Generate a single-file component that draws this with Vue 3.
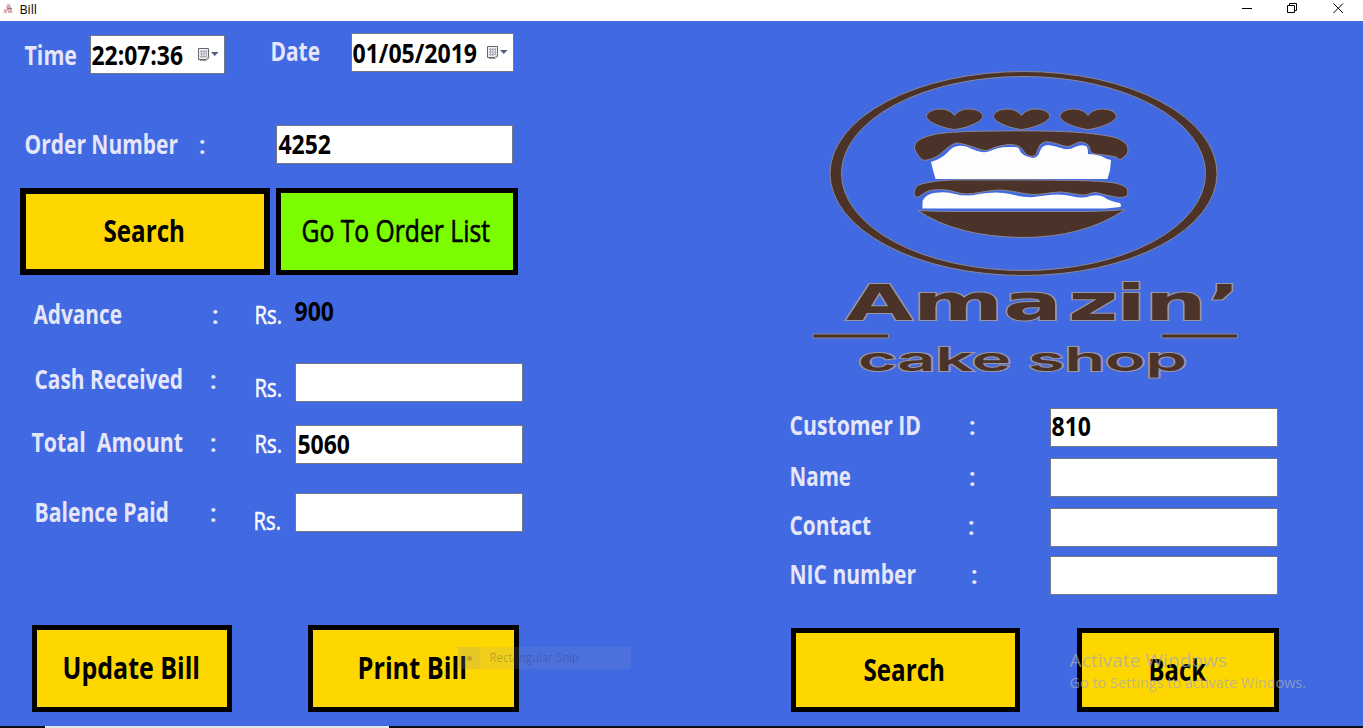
<script setup>
import { h } from 'vue'

// Text fitted to a fixed advance width
const Fit = (p) => {
  const s = p.s || 26
  return h('svg', { class: 'fit', width: p.w, height: Math.round(s * 1.2) }, [
    h('text', {
      x: -0.5,
      y: s * 0.92 + 0.8,
      'font-size': s,
      textLength: p.w + 1.5,
      lengthAdjust: 'spacingAndGlyphs',
    }, p.t),
  ])
}
Fit.props = ['t', 'w', 's']

// Closed smooth curve through a list of points
const smooth = (pts) => {
  const n = pts.length
  const k = 7
  let d = `M${pts[0]}`
  for (let i = 0; i < n; i++) {
    const a = pts[(i - 1 + n) % n], b = pts[i], c = pts[(i + 1) % n], e = pts[(i + 2) % n]
    d += `C${b[0] + (c[0] - a[0]) / k},${b[1] + (c[1] - a[1]) / k} ${c[0] - (e[0] - b[0]) / k},${c[1] - (e[1] - b[1]) / k} ${c}`
  }
  return d + 'Z'
}

const topBun = smooth([[914.5, 148], [920, 139.5], [936.7, 134], [963, 131.7], [1000, 131], [1040, 131], [1080, 132.5], [1113, 137], [1126, 144], [1127.5, 153], [1120, 159.5], [1116, 157], [1104, 155], [1092, 153], [1088, 145], [1080, 142], [1068, 146.5], [1056, 143.5], [1046.7, 141.7], [1040, 145], [1035, 155.5], [1027, 155], [1020, 147], [1010, 144.5], [996, 147], [985, 150.5], [970, 146], [956.7, 143], [948, 147.5], [936.7, 156.5], [923, 160]])
const cream = 'M931 162Q941 159 947 153Q953 146 958 146Q965 145 972 149Q983 154 990 151Q998 147 1008 147H1015Q1019 147 1020 151Q1022 156 1033 158Q1038 158 1040 151Q1042 145 1048 145Q1055 146 1061 148Q1068 151 1075 147Q1081 144 1086 146Q1088 147 1088 154Q1094 154 1101 156Q1106 159 1111 160L1110 170L1107.5 179H935.5L933 170Z'
const midBun = smooth([[914.5, 191.5], [920, 184.5], [946, 180.3], [990, 180], [1030, 180], [1080, 180.5], [1113, 182.7], [1126.5, 188], [1127, 195.5], [1120, 197.5], [1108, 195.5], [1095, 192.5], [1083, 195], [1060, 192], [1033, 194.5], [1000, 190], [966.7, 194], [946.7, 190], [930, 190.5], [917, 197.3]])
const cream2 = 'M922.5 208.5V201Q926 194 934 193Q946 191 955 194Q967 197 979 194Q997 191 1010 194Q1028 199 1041 196Q1059 193 1071 196Q1083 199 1090 196Q1099 194 1104 197Q1109 201 1120 203Q1122 206 1120 207L1106 208.5Z'
const heart = 'M954.5 115.5C951 111 946 109 940 109C932 109 926.5 113 926.5 116.5C927 122 942 128 954.5 129.5C967 128 982 122 982.8 116.5C982.5 112 976 109 969 109C963 109 958 111 954.5 115.5Z'

const clientRows = [
  { id: 'customer', label: 'Customer ID', w: 130, value: '810' },
  { id: 'fullname', label: 'Name', w: 60 },
  { id: 'contact', label: 'Contact', w: 80 },
  { id: 'nic', label: 'NIC number', w: 125 },
]
</script>

<template>
  <div class="window">
    <header class="titlebar">
      <svg class="appicon" width="10" height="10" viewBox="0 0 10 10" fill="none" stroke="#b5676c">
        <path d="M4 1H7M3 3H8M4 4.5H9M1 6H9M0.500 8H4M5 8H9.500" stroke-width="1" />
      </svg>
      <Fit class="caption" t="Bill" :w="16" :s="12" />
      <svg class="controls" width="104" height="16" viewBox="0 0 104 16" fill="none" stroke="#000">
        <path d="M1 8.500H11M46.500 5.500H53.500V12.500H46.500ZM48.500 5.500V3.500H55.500V10.500H53.500" />
        <path d="M92.500 3.500L102 13M102 3.500L92.500 13" />
      </svg>
    </header>

    <main class="body">
      <section class="bill">
        <div class="row when">
          <Fit class="time-label" t="Time" :w="51" />
          <div class="box time">
            <Fit t="22:07:36" :w="90" />
            <svg class="cal" width="21" height="13" viewBox="0 0 21 13">
              <path d="M.5.5H10.500V9L8 11.500H.5Z" fill="#eeeff2" stroke="#666" />
              <path d="M2 3.500H9M2 6H9M2 8.500H9M3.500 2V10M6 2V10M8.500 2V9" stroke="#a9adba" />
              <path d="M2 12.500H8.500L11.500 9.500" fill="none" stroke="#999" />
              <path d="M13 4H20.500L16.750 8Z" fill="#4d5f7c" />
            </svg>
          </div>
          <Fit class="date-label" t="Date" :w="48" />
          <div class="box date">
            <Fit t="01/05/2019" :w="123" />
            <svg class="cal" width="21" height="13" viewBox="0 0 21 13">
              <path d="M.5.5H10.500V9L8 11.500H.5Z" fill="#eeeff2" stroke="#666" />
              <path d="M2 3.500H9M2 6H9M2 8.500H9M3.500 2V10M6 2V10M8.500 2V9" stroke="#a9adba" />
              <path d="M2 12.500H8.500L11.500 9.500" fill="none" stroke="#999" />
              <path d="M13 4H20.500L16.750 8Z" fill="#4d5f7c" />
            </svg>
          </div>
        </div>

        <div class="row order">
          <Fit class="order-label" t="Order Number" :w="152" />
          <Fit class="order-colon" t=":" :w="6" />
          <div class="box order-box"><Fit t="4252" :w="51" /></div>
        </div>

        <div class="row actions">
          <button class="btn find"><Fit t="Search" :w="80" :s="31" /></button>
          <button class="btn list"><Fit t="Go To Order List" :w="187" :s="31" /></button>
        </div>

        <div class="money advance">
          <Fit class="label" t="Advance" :w="87" />
          <Fit class="colon" t=":" :w="6" />
          <Fit class="rs" t="Rs." :w="26" />
          <Fit class="amount" t="900" :w="38" />
        </div>
        <div class="money cash">
          <Fit class="label" t="Cash Received" :w="147" />
          <Fit class="colon" t=":" :w="6" />
          <Fit class="rs" t="Rs." :w="26" />
          <div class="box"></div>
        </div>
        <div class="money total">
          <Fit class="label" :t="'Total\u00a0 Amount'" :w="150" />
          <Fit class="colon" t=":" :w="6" />
          <Fit class="rs" t="Rs." :w="26" />
          <div class="box"><Fit t="5060" :w="51" /></div>
        </div>
        <div class="money balance">
          <Fit class="label" t="Balence Paid" :w="133" />
          <Fit class="colon" t=":" :w="6" />
          <Fit class="rs" t="Rs." :w="26" />
          <div class="box"></div>
        </div>

        <div class="row bottom">
          <button class="btn update"><Fit t="Update Bill" :w="136" :s="31" /></button>
          <button class="btn print"><Fit t="Print Bill" :w="108" :s="31" /></button>
        </div>
      </section>

      <section class="client">
        <svg class="logo" width="450" height="330" viewBox="800 60 450 330">
          <g fill="#4b3329" stroke="#8c8796" stroke-width="1">
            <path fill-rule="evenodd" d="M830 173.500A193.500 102 0 0 1 1217 173.500A193.500 102 0 0 1 830 173.500ZM841.500 173.500A182 97 0 0 0 1205.500 173.500A182 97 0 0 0 841.500 173.500Z" />
            <path :d="heart" />
            <path :d="heart" transform="translate(67 0)" />
            <path :d="heart" transform="translate(133.500 0)" />
            <path :d="topBun" />
            <path :d="midBun" />
            <path d="M918 210.500Q935 211.500 960 211.500H1085Q1110 211 1125 209.500Q1084 237.500 1022 237.500Q956 236.500 918 210.500Z" />
            <path d="M813 334H888.500V338H813ZM1161.500 334H1237.500V338H1161.500Z" />
          </g>
          <g fill="#fdfdfd">
            <path :d="cream" />
            <path :d="cream2" />
          </g>
          <g class="brand">
            <text class="name" transform="scale(1.73 1)" x="489 527.7 580 617.3 645.2 661.8 698" y="320">Amazin’</text>
            <text class="sub" x="858" y="371" textLength="329" lengthAdjust="spacingAndGlyphs">cake shop</text>
          </g>
        </svg>

        <div v-for="r in clientRows" :key="r.id" class="person" :class="r.id">
          <Fit class="label" :t="r.label" :w="r.w" />
          <Fit class="colon" t=":" :w="6" />
          <div class="box"><Fit v-if="r.value" :t="r.value" :w="38" /></div>
        </div>

        <div class="row client-actions">
          <button class="btn lookup"><Fit t="Search" :w="80" :s="31" /></button>
          <button class="btn back"><Fit t="Back" :w="56" :s="31" /></button>
        </div>
      </section>
    </main>

    <footer class="taskbar"><span class="task-start"></span><span class="task-search"></span></footer>

    <div class="snip"><span class="snip-mark"><i></i></span><Fit t="Rectangular Snip" :w="88" :s="12" /></div>
    <div class="watermark">
      <Fit t="Activate Windows" :w="156" :s="19" />
      <Fit class="second" t="Go to Settings to activate Windows." :w="235" :s="15" />
    </div>
  </div>
</template>

<style>
body { margin: 0; overflow: hidden; }
</style>

<style scoped>
.window {
  position: relative;
  display: flex;
  flex-direction: column;
  width: 1363px;
  height: 728px;
  overflow: hidden;
  background: #4169e1;
  color: #e6e6fa;
  font-family: "Open Sans", "Noto Sans", sans-serif;
  font-weight: 700;
}
.fit { display: block; flex: none; overflow: visible; fill: currentColor; }
.titlebar { display: flex; height: 21px; background: #fff; color: #000; font-weight: 400; flex: none; }
.appicon { margin: 4px 0 0 3px; }
.caption { margin: 2px 0 0 7px; }
.controls { margin-left: auto; margin-right: 18px; }
.body { display: flex; height: 705px; }
.bill { width: 790px; }
.client { width: 573px; }
.row { display: flex; align-items: flex-start; }
.box {
  box-sizing: border-box;
  display: flex;
  align-items: flex-start;
  width: 228px;
  height: 39px;
  padding: 3px 0 0 2px;
  border: 1px solid #747884;
  background: #fff;
  color: #000;
}
.when { height: 104px; }
.time-label { margin: 19px 0 0 25px; }
.time { width: 135px; margin: 14px 0 0 14px; padding: 4px 0 0 1px; }
.date-label { margin: 15px 0 0 46px; }
.date { width: 163px; margin: 12px 0 0 32px; padding: 4px 0 0 1px; }
.cal { margin: 8px 5px 0 auto; }
.order { height: 63px; }
.order-label { margin: 4px 0 0 25px; }
.order-colon { margin: 4px 0 0 22px; font-weight: 600; }
.order-box { width: 237px; margin-left: 71px; }
.actions { height: 108px; }
.btn {
  box-sizing: border-box;
  display: flex;
  align-items: center;
  justify-content: center;
  height: 87px;
  padding: 0 3px 0 0;
  border: 5px solid #000;
  border-radius: 0;
  background: #ffd700;
  color: #000;
  font: inherit;
}
.find { width: 250px; margin-left: 20px; border-width: 6px; }
.list { width: 242px; margin-left: 6px; background: #7cfc00; font-weight: 400; stroke: #000; stroke-width: 0.6px; }
.money {
  display: grid;
  grid-template-columns: 178px 45px 40px 228px;
  align-items: start;
  margin-left: 32px;
}
.money .label { margin-left: 3px; }
.rs { color: #fafaff; font-weight: 400; stroke: #fafaff; stroke-width: 0.6px; }
.colon { font-weight: 600; }
.advance { height: 67px; }
.advance .label { margin: 3px 0 0 2px; }
.advance .colon { margin: 3px 0 0 2px; }
.advance .rs { margin-top: 3px; }
.amount { color: #000; }
.cash { height: 62px; }
.cash .label, .cash .colon { margin-top: 1px; }
.cash .rs { margin-top: 9px; }
.total { height: 68px; }
.total .label { margin: 2px 0 0; }
.total .colon { margin-top: 2px; }
.total .rs { margin-top: 3px; }
.balance { height: 132px; }
.balance .label, .balance .colon { margin-top: 4px; }
.balance .rs { margin: 12px 0 0 -1px; }
.update { width: 200px; margin-left: 32px; }
.print { width: 211px; margin-left: 76px; }

.logo { display: block; margin: 39px 0 18px 10px; }
.brand { fill: #4b3329; stroke: #9b96a4; stroke-width: 2px; paint-order: stroke; }
.name { font: 700 50px "DejaVu Sans", sans-serif; }
.sub { font: 600 33px "Inter", sans-serif; }
.person { display: grid; grid-template-columns: 179px 81px 228px; align-items: start; height: 50px; }
.person .label, .person .colon { margin-top: 2px; }
.person .box { padding: 2px 0 0 1px; }
.person.fullname .label, .person.fullname .colon { margin-top: 3px; }
.person.contact { height: 48px; }
.person.contact .colon { margin-left: -1px; }
.person.nic { height: 72px; }
.person.nic .label { margin-top: 3px; }
.person.nic .colon { margin: 3px 0 0 2px; }
.client-actions .btn { height: 84px; }
.lookup { width: 229px; margin-left: 1px; }
.back { width: 202px; margin-left: 57px; }

.taskbar { display: flex; height: 2px; background: #0b0f12; }
.task-start { width: 45px; }
.task-search { width: 344px; background: #dfe9f3; }

.snip {
  position: absolute;
  left: 458px;
  top: 647px;
  display: flex;
  width: 173px;
  height: 22px;
  background: rgba(150, 165, 190, 0.14);
  color: rgba(30, 40, 80, 0.27);
  font-weight: 400;
}
.snip .fit { margin: 3px 0 0 10px; }
.snip-mark { display: flex; align-items: center; justify-content: center; width: 22px; background: rgba(120, 130, 150, 0.08); }
.snip-mark i { width: 5px; height: 5px; border-radius: 50%; background: rgba(60, 60, 60, 0.25); }
.watermark { position: absolute; left: 1070px; top: 649px; color: rgba(165, 170, 185, 0.72); font-weight: 400; }
.second { margin-top: 1px; }
</style>
